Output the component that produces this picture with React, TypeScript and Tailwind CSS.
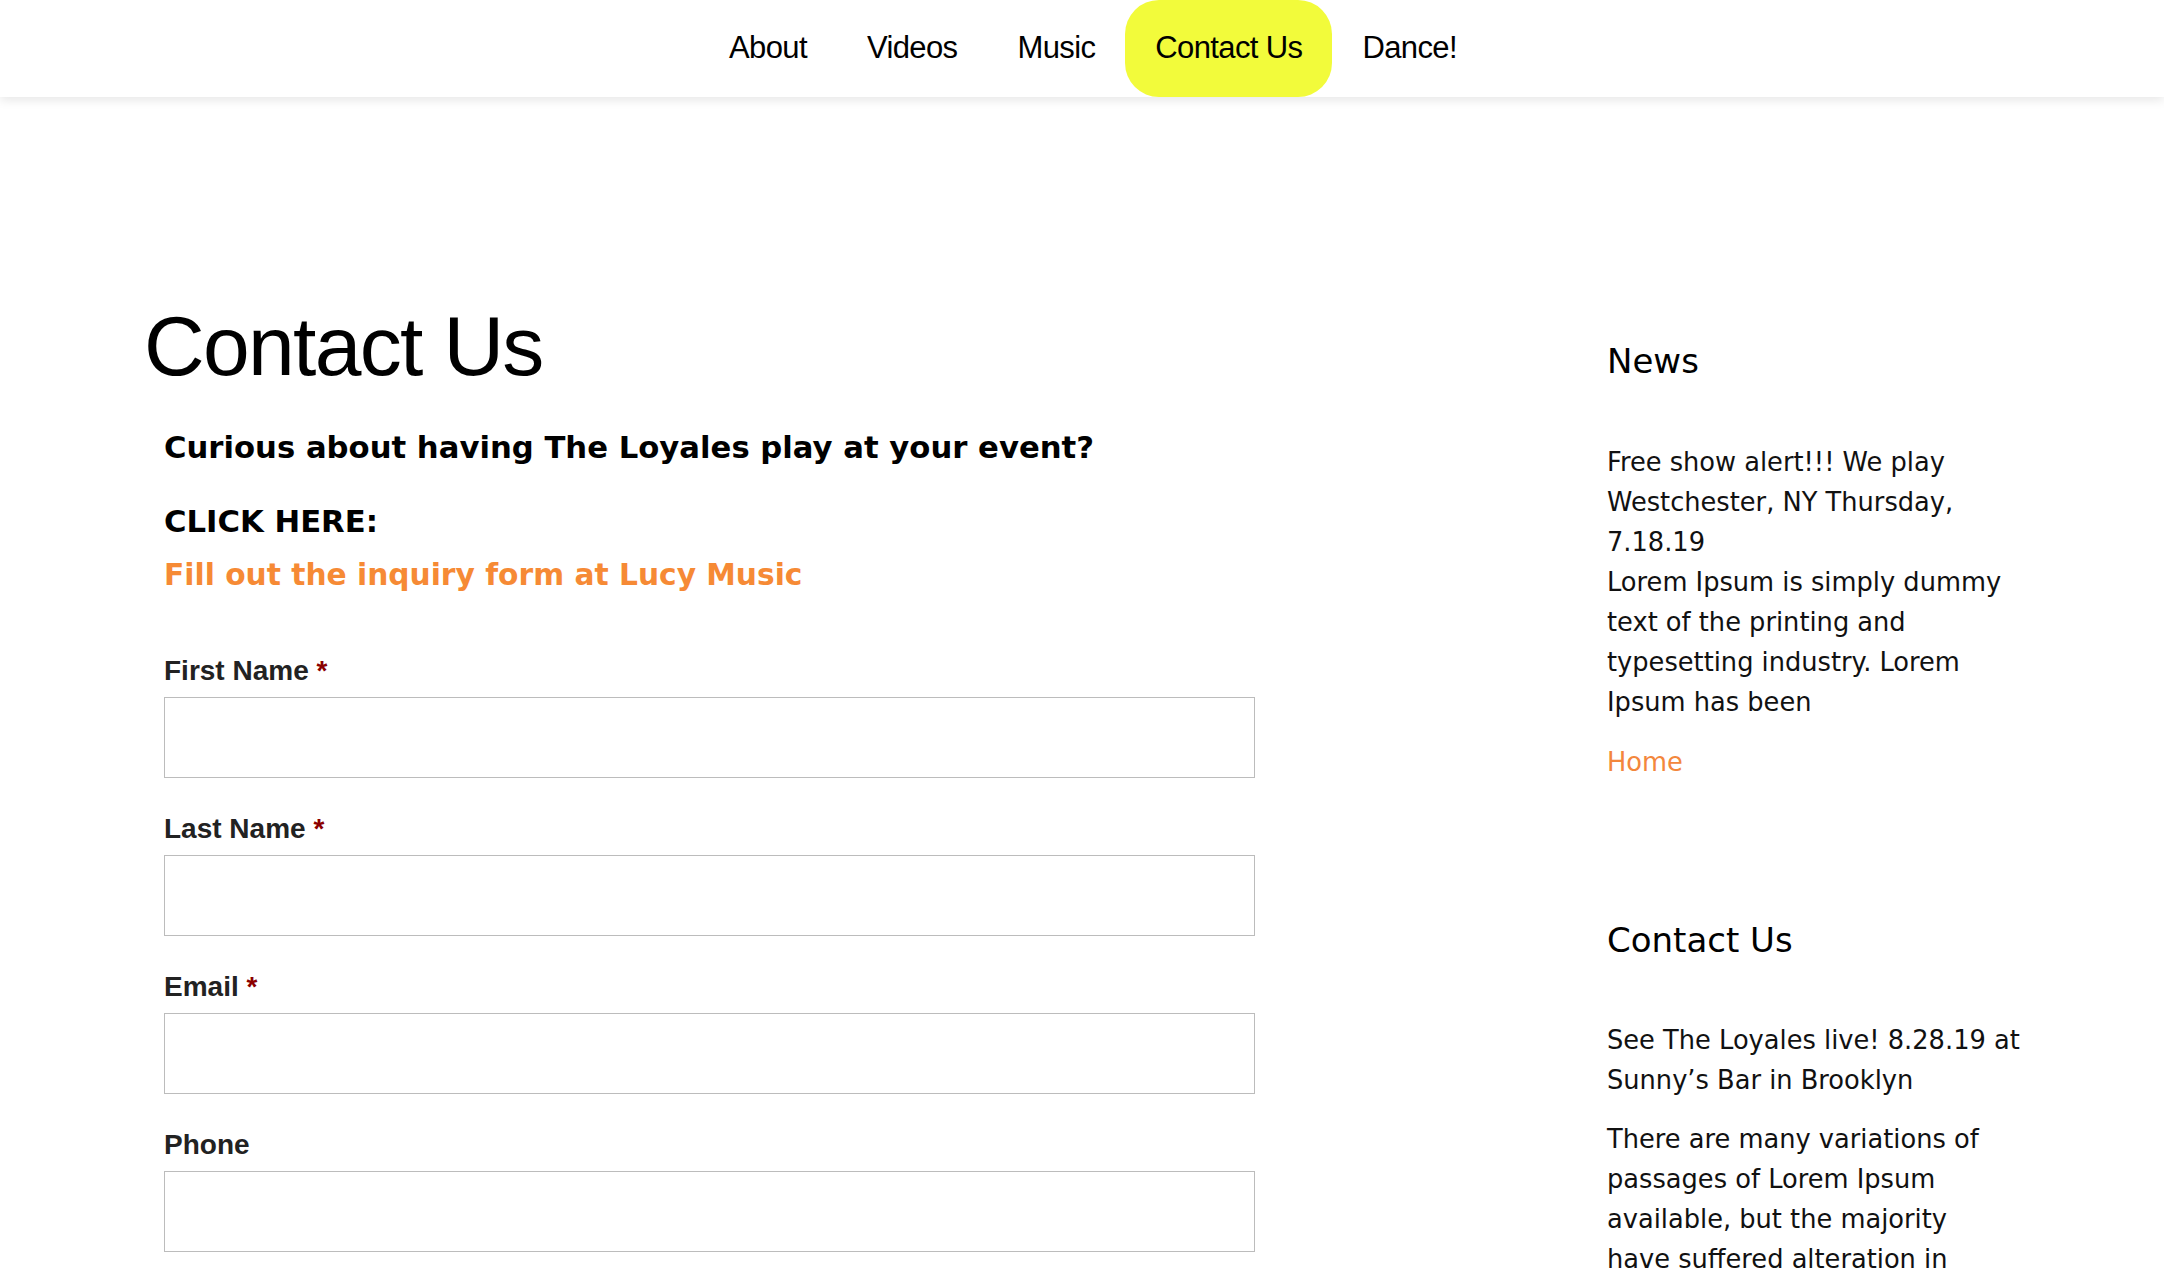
import React from "react";

const navItems = ["About", "Videos", "Music", "Contact Us", "Dance!"];

const fields = [
  { label: "First Name", required: true },
  { label: "Last Name", required: true },
  { label: "Email", required: true },
  { label: "Phone", required: false },
];

const Header: React.FC = () => {
  return (
    <header className="relative z-10 h-[97px] bg-white shadow-[0_3px_10px_rgba(0,0,0,0.10)]">
      <nav className="flex h-full items-stretch pl-[699px] font-['Liberation_Sans',Arial,sans-serif] text-[31px] tracking-[-0.02em] text-black">
        {navItems.map((item) => (
          <a
            key={item}
            href="#"
            className={`flex items-center px-[30px] ${
              item === "Contact Us" ? "rounded-[34px] bg-[#f2fb3b]" : ""
            }`}
          >
            {item}
          </a>
        ))}
      </nav>
    </header>
  );
};

const ContactForm: React.FC = () => {
  return (
    <form className="mt-[59px] flex flex-col gap-[34px] pr-px">
      {fields.map((f) => (
        <div key={f.label} className="flex flex-col">
          <label className="mb-[10px] font-['Liberation_Sans',Arial,sans-serif] text-[28px] font-bold leading-[33px] text-[#222]">
            {f.label}
            {f.required && <span className="text-[#8b0000]"> *</span>}
          </label>
          <input
            type="text"
            className="h-[81px] w-full border border-[#bcbcbc] bg-white px-3 outline-none"
          />
        </div>
      ))}
    </form>
  );
};

const Sidebar: React.FC = () => {
  return (
    <aside className="mt-[37px] w-[416px] shrink-0 font-['DejaVu_Sans',sans-serif] text-[25.7px] leading-[40px] text-[#111]">
      <h3 className="text-[34px] leading-[40px] text-black">News</h3>
      <p className="mt-[61px]">
        Free show alert!!! We play Westchester, NY Thursday, 7.18.19
        <br />
        Lorem Ipsum is simply dummy text of the printing and typesetting
        industry. Lorem Ipsum has been
      </p>
      <a href="#" className="mt-[20px] block text-[#f3873c]">
        Home
      </a>

      <h3 className="mt-[138px] text-[34px] leading-[40px] text-black">
        Contact Us
      </h3>
      <p className="mt-[60px]">
        See The Loyales live! 8.28.19 at Sunny’s Bar in Brooklyn
      </p>
      <p className="mt-[19px]">
        There are many variations of passages of Lorem Ipsum available, but
        the majority
        <br />
        have suffered alteration in some form, by injected humour, or
        randomised words which don't look even slightly believable.
      </p>
    </aside>
  );
};

const App: React.FC = () => {
  return (
    <div className="min-h-screen bg-white">
      <Header />
      <main className="flex pl-[144px] pt-[207px] pb-20">
        <section className="w-[1112px] shrink-0">
          <h1 className="font-['Liberation_Sans',Arial,sans-serif] text-[84px] leading-[84px] tracking-[-0.02em] text-black">
            Contact Us
          </h1>
          {/* Futura-like bold text: DejaVu Sans Bold has the closest widths */}
          <div className="pl-[20px] font-['DejaVu_Sans',sans-serif] font-bold">
            <p className="mt-[40px] text-[30.7px] leading-[40px] text-black">
              Curious about having The Loyales play at your event?
            </p>
            <p className="mt-[34px] text-[30.7px] leading-[40px] text-black">
              CLICK HERE:
            </p>
            <a
              href="#"
              className="mt-[13px] block text-[29.7px] leading-[40px] text-[#f68a35]"
            >
              Fill out the inquiry form at Lucy Music
            </a>
            <ContactForm />
          </div>
        </section>
        <div className="w-[351px] shrink-0" />
        <Sidebar />
      </main>
    </div>
  );
};

export default App;
